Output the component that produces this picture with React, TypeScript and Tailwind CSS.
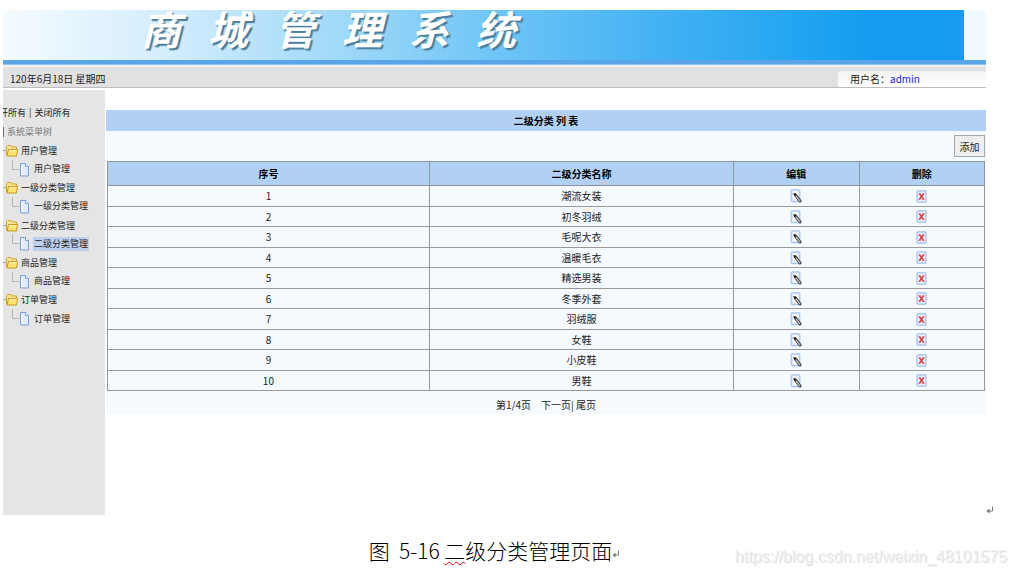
import React from "react";

const menu = ["用户管理", "一级分类管理", "二级分类管理", "商品管理", "订单管理"];
const activeItem = "二级分类管理";

const categories = [
  "潮流女装",
  "初冬羽绒",
  "毛呢大衣",
  "温暖毛衣",
  "精选男装",
  "冬季外套",
  "羽绒服",
  "女鞋",
  "小皮鞋",
  "男鞋",
];

function FolderIcon() {
  return (
    <svg className="h-[13px] w-[15px] shrink-0" viewBox="0 0 15 13" aria-hidden="true">
      <path d="M0 6.5h3" stroke="#a8a8a8" />
      <path d="M3.500 11v-8.500l1-1h3.500l1 1.500h4.500v4" fill="#f9e48f" stroke="#cfa42c" />
      <path d="M4 12 5.500 5.500h9L13.500 12z" fill="#fde271" stroke="#c89b1e" strokeLinejoin="round" />
      <path d="M6 6.700h7.500" stroke="#fff7c8" />
    </svg>
  );
}

function PageIcon() {
  return (
    <svg className="h-[19px] w-[19px] shrink-0" viewBox="0 0 19 19" aria-hidden="true">
      <path d="M1.500 0v9.500h7" fill="none" stroke="#b4b4b4" />
      <path d="M9.500 3.500h5l3 3v9.500h-8z" fill="#dfebfd" stroke="#7c9fda" strokeLinejoin="round" />
      <path d="M11 5v9.500" stroke="#fff" />
      <path d="M14.500 3.500v3h3" fill="#fff" stroke="#7c9fda" strokeLinejoin="round" />
    </svg>
  );
}

function EditIcon() {
  return (
    <svg className="h-[14px] w-[12px]" viewBox="0 0 12 14" aria-hidden="true">
      <rect x="1.200" y="0.800" width="8.600" height="11.800" rx="1" fill="#e0eafc" stroke="#a9c3ef" strokeWidth="1.200" />
      <rect x="3" y="2.500" width="5" height="8" fill="#fff" />
      <path d="M5.500 6l4.500 6" stroke="#444" strokeWidth="3" strokeLinecap="round" />
      <path d="M6 6.800l4 5.300" stroke="#c4c4c4" strokeWidth="1.300" />
      <path d="M3.200 4l3.200 0.800-2.200 2z" fill="#111" />
    </svg>
  );
}

function DeleteIcon() {
  return (
    <svg className="h-[13px] w-[11px]" viewBox="0 0 11 13" aria-hidden="true">
      <rect x="1" y="0.800" width="9" height="11.400" rx="1" fill="#eaf1fd" stroke="#a3bdec" strokeWidth="1.200" />
      <path d="M3.400 3.800l4.200 5.600M7.600 3.800l-4.200 5.600" stroke="#d93a3e" strokeWidth="1.500" />
      <path d="M2.500 3.800h2M6.500 3.800h2M2.500 9.400h2M6.500 9.400h2" stroke="#d93a3e" strokeWidth="0.800" />
    </svg>
  );
}

function ReturnMark() {
  return (
    <svg className="h-[9px] w-[8px] shrink-0" viewBox="0 0 8 9" aria-hidden="true">
      <path d="M6.500 0.500v4.500H2" fill="none" stroke="#777" />
      <path d="M0.500 5l3-2.500v5z" fill="#777" />
    </svg>
  );
}

export default function App() {
  return (
    <div className="min-h-screen bg-white pl-[3px] pt-[10px] font-['Noto_Sans_CJK_SC',sans-serif] text-[10px] text-[#222]">
      <div className="flex items-end">
        <div className="min-w-0 flex-1">
          <header>
            <div className="flex h-[50px] bg-[#f0f9ff]">
              <h1 className="flex flex-1 gap-[27px] overflow-hidden border-r border-white bg-[linear-gradient(90deg,#f5fbff_0%,#d3edfd_17%,#a3daf9_34%,#6dc4f6_52%,#44b2f3_68%,#22a5f1_83%,#149df0_90%)] pl-[138px] text-[40px] font-bold italic leading-[36px] text-white [text-shadow:2px_2px_1px_#4b7d99]">
                {["商", "城", "管", "理", "系", "统"].map((c) => (
                  <span key={c}>{c}</span>
                ))}
              </h1>
              <div className="w-[21px]" />
            </div>
            <div className="h-[5px] border-b border-[#8fc4f0] bg-[#5aa5e8]" />
            <div className="flex h-[23px] items-end justify-between border-b border-t-2 border-b-[#bdbdbd] border-t-[#f1f1f1] bg-[#e1e1e1] pl-[7px]">
              <span className="leading-[16px]">120年6月18日 星期四</span>
              <div className="flex w-[148px] rounded-t-[3px] bg-linear-to-b from-[#f4f4f4] to-white pl-[12px] leading-[16px]">
                <span>用户名：</span>
                <span className="text-[#1a1aff]">admin</span>
              </div>
            </div>
          </header>

          <div className="mt-[2px] flex">
            <nav className="min-h-[425px] w-[102px] shrink-0 overflow-hidden bg-[#e5e5e5] pt-[13px] text-[9px] leading-[19px]">
              <div className="-ml-1 flex gap-[3px] whitespace-nowrap">
                <a href="#open">开所有</a>
                <span>|</span>
                <a href="#close">关闭所有</a>
              </div>
              <div className="flex items-center gap-[3px] text-[#777]">
                <span className="h-[10px] w-px bg-[#667]" />
                系统菜单树
              </div>
              <ul className="grid h-[187px] auto-rows-fr">
                {menu.map((name) => (
                  <li key={name}>
                    <div className="flex h-1/2 items-center gap-[3px]">
                      <FolderIcon />
                      <span>{name}</span>
                    </div>
                    <div className="flex h-1/2 items-center gap-[3px] pl-[8px]">
                      <PageIcon />
                      <a
                        href="#category"
                        className={name === activeItem ? "bg-[#bcd0ee] px-px leading-[14px]" : "px-px leading-[14px]"}
                      >
                        {name}
                      </a>
                    </div>
                  </li>
                ))}
              </ul>
            </nav>

            <main className="ml-px mt-[20px] flex-1 self-start bg-[#f5faff]">
              <h2 className="bg-[#b0d1f4] text-center font-bold leading-[21px] text-black">二级分类 列 表</h2>
              <div className="flex h-[30px] items-center justify-end pr-px">
                <button type="button" className="h-[22px] w-[31px] border border-[#a5a5a5] bg-[#efefef]">
                  添加
                </button>
              </div>
              <div className="px-px">
                <table className="w-full table-fixed border-collapse text-center leading-[16px]">
                  <colgroup>
                    <col className="w-[36.700%]" />
                    <col className="w-[34.700%]" />
                    <col className="w-[14.300%]" />
                    <col className="w-[14.300%]" />
                  </colgroup>
                  <thead>
                    <tr className="h-[24px] bg-[#b0d1f4] text-black">
                      {["序号", "二级分类名称", "编辑", "删除"].map((h) => (
                        <th key={h} className="border border-[#8d969f] p-0 font-bold">
                          {h}
                        </th>
                      ))}
                    </tr>
                  </thead>
                  <tbody>
                    {categories.map((name, i) => (
                      <tr key={name} className="odd:h-[21px] even:h-[20px]">
                        <td className="border border-[#9a9a9a] p-0">{i + 1}</td>
                        <td className="border border-[#9a9a9a] p-0">{name}</td>
                        <td className="border border-[#9a9a9a] p-0">
                          <a href="#edit" aria-label="编辑" className="flex justify-center">
                            <EditIcon />
                          </a>
                        </td>
                        <td className="border border-[#9a9a9a] p-0">
                          <a href="#delete" aria-label="删除" className="flex justify-center">
                            <DeleteIcon />
                          </a>
                        </td>
                      </tr>
                    ))}
                  </tbody>
                </table>
              </div>
              <div className="flex h-[23px] items-center justify-center pt-[3px]">
                <span>第1/4页</span>
                <span className="ml-[10px]">
                  <a href="#next">下一页</a>| <a href="#last">尾页</a>
                </span>
              </div>
            </main>
          </div>
        </div>
        <div className="w-[30px] shrink-0">
          <ReturnMark />
        </div>
      </div>

      <footer className="relative mt-[20px] flex items-end justify-center pr-[30px] text-[21px] font-light leading-[30px] text-black">
        <p>
          图&nbsp; 5-16{" "}
          <span className="underline decoration-[#f00] decoration-wavy decoration-1 underline-offset-2">二</span>
          级分类管理页面
        </p>
        <span className="pb-[6px]">
          <ReturnMark />
        </span>
        <span className="absolute right-[9px] top-[13px] font-['Liberation_Sans',sans-serif] text-[16px] font-normal leading-[18px] text-[#f0f0f0] [text-shadow:1px_1px_0_#dedede]">
          https://blog.csdn.net/weixin_48101575
        </span>
      </footer>
    </div>
  );
}
